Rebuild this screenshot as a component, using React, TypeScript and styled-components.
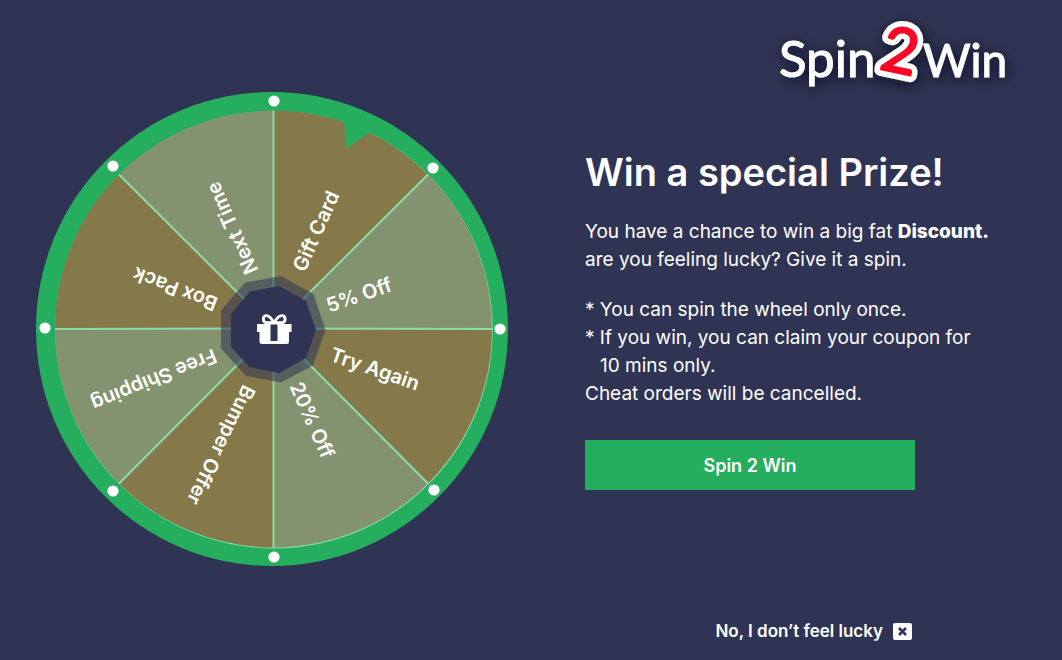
import React from 'react';
import styled, { createGlobalStyle } from 'styled-components';

const navy = '#303454';
const green = '#26ae5f';
const brown = '#857949';
const sage = '#84936f';
const mint = '#8bdcaa';

const GlobalStyle = createGlobalStyle`
  *, *::before, *::after { box-sizing: border-box; }
  body {
    margin: 0;
    background: ${navy};
    color: #fff;
    font-family: Inter, "Liberation Sans", sans-serif;
  }
`;

const Page = styled.main`
  display: grid;
  grid-template-columns: minmax(0, 472px) minmax(0, 1fr);
  column-gap: 77px;
  min-height: 100vh;
  padding: 0 56px 0 36px;
`;

const WheelPanel = styled.section`
  display: flex;
  align-items: center;
  justify-content: center;
  padding-bottom: 2px;
`;

const WheelSvg = styled.svg`
  display: block;
  width: 100%;
  height: auto;
`;

const WheelLabel = styled.text`
  fill: #fff;
  font-family: Inter, "Liberation Sans", sans-serif;
  font-size: 20px;
  font-weight: 600;
  text-anchor: middle;
  dominant-baseline: central;
`;

const Offer = styled.section`
  display: flex;
  flex-direction: column;
  padding: 12px 0 17px;
`;

const LogoSvg = styled.svg`
  display: block;
  align-self: flex-end;
  width: 240px;
  height: 88px;
  overflow: visible;
`;

const LogoWord = styled.text<{ $size: number }>`
  fill: #fff;
  stroke: #fff;
  stroke-width: 1px;
  font-family: Lato, "Liberation Sans", sans-serif;
  font-size: ${(p) => p.$size}px;
`;

const LogoDigit = styled.text<{ $outline?: boolean }>`
  fill: ${(p) => (p.$outline ? '#fff' : '#f80824')};
  stroke: ${(p) => (p.$outline ? '#fff' : '#f80824')};
  stroke-width: ${(p) => (p.$outline ? 13 : 2)}px;
  stroke-linejoin: round;
  font-family: Lato, "Liberation Sans", sans-serif;
  font-size: 63px;
  font-weight: 400;
`;

const Title = styled.h1`
  margin: 48px 0 0;
  font-size: 38px;
  line-height: 48px;
  font-weight: 600;
`;

const Copy = styled.p`
  margin: 22px 0 0;
  font-size: 19px;
  line-height: 28px;
  font-weight: 400;

  strong { font-weight: 800; }
`;

const Rules = styled.ul`
  margin: 22px 0 0;
  padding: 0;
  list-style: none;
  font-size: 19px;
  line-height: 28px;
`;

const Rule = styled.li<{ $starred?: boolean }>`
  padding-left: ${(p) => (p.$starred ? 15 : 0)}px;
  text-indent: ${(p) => (p.$starred ? -15 : 0)}px;
`;

const SpinButton = styled.button`
  width: 100%;
  max-width: 330px;
  height: 50px;
  margin-top: 32px;
  border: 0;
  background: ${green};
  color: #fff;
  font: inherit;
  font-size: 18px;
  font-weight: 600;
  cursor: pointer;
`;

const Footer = styled.footer`
  display: flex;
  justify-content: flex-end;
  width: 100%;
  max-width: 327px;
  margin-top: auto;
`;

const DeclineButton = styled.button`
  display: flex;
  align-items: center;
  gap: 10px;
  padding: 0;
  border: 0;
  background: none;
  color: #fff;
  font: inherit;
  font-size: 17px;
  line-height: 24px;
  font-weight: 600;
  cursor: pointer;
`;

const CX = 273.5;
const CY = 329;
const R = 218.5;

const prizes = [
  { label: 'Gift Card', x: 316, y: 231, angle: -66 },
  { label: '5% Off', x: 359, y: 295, angle: -19 },
  { label: 'Try Again', x: 375, y: 369, angle: 19 },
  { label: '20% Off', x: 312, y: 420, angle: 66 },
  { label: 'Bumper Offer', x: 221, y: 445, angle: 116 },
  { label: 'Free Shipping', x: 154, y: 380, angle: 158 },
  { label: 'Box Pack', x: 175, y: 289, angle: 201 },
  { label: 'Next Time', x: 232, y: 228, angle: 246 },
];

const studs = [
  [274, 101], [433, 168], [500, 329], [434, 490],
  [274, 557], [113, 491], [45, 328], [113, 166],
];

const point = (deg: number) => {
  const a = (deg * Math.PI) / 180;
  return `${(CX + R * Math.cos(a)).toFixed(1)} ${(CY + R * Math.sin(a)).toFixed(1)}`;
};

const Wheel = () => (
  <WheelSvg viewBox="36 92 472 474" role="img" aria-label="Prize wheel">
    <ellipse cx="272" cy="329" rx="236" ry="237" fill={green} />
    <circle cx={CX + 0.5} cy={CY + 0.7} r={R + 0.2} fill={mint} />
    {prizes.map((p, i) => (
      <path
        key={p.label}
        d={`M${CX} ${CY}L${point(-90 + i * 45)}A${R} ${R} 0 0 1 ${point(-45 + i * 45)}Z`}
        fill={i % 2 ? sage : brown}
      />
    ))}
    {prizes.map((p, i) => (
      <path key={p.label} d={`M${CX} ${CY - 0.5}L${point(-90 + i * 45)}`} stroke={mint} strokeWidth="2" />
    ))}
    <path d="M340 112L344 121.500L346.500 148.500L369.500 132.500L380 128Z" fill={green} />
    {studs.map(([x, y]) => (
      <circle key={`${x}-${y}`} cx={x} cy={y} r="5.600" fill="#fff" />
    ))}
    <path
      d="M325.500 329.700L313.500 294L281 276L245 282.500L221 310.500V348.500L246 376L281 382.500L313 365.500Z"
      fill={navy}
      fillOpacity="0.55"
    />
    <path
      d="M316 329.700L306 301L279 286L250 291.500L231 314V347L250 367.500L279.500 373L306 358Z"
      fill={navy}
    />
    <g fill="#fff">
      <path d="M257 324H291.500V332H289V341.500Q289 344 286.500 344H262Q259.500 344 259.500 341.500V332H257Z" />
      <path
        d="M274 323C271 317 268 315.300 265.800 315.600C262.500 316 262.500 322 266 322.600H282.500C286 322 286 316 282.500 315.600C280 315.300 277 317 274 323"
        fill="none"
        stroke="#fff"
        strokeWidth="2.800"
      />
      <path d="M270.500 324.500H277.500V341H270.500Z" fill={navy} />
    </g>
    {prizes.map((p) => (
      <WheelLabel key={p.label} x={p.x} y={p.y} transform={`rotate(${p.angle} ${p.x} ${p.y})`}>
        {p.label}
      </WheelLabel>
    ))}
  </WheelSvg>
);

const Logo = () => (
  <LogoSvg viewBox="766 12 240 88" role="img" aria-label="Spin2Win">
    <defs>
      <filter id="logoShadow" x="-20%" y="-50%" width="140%" height="200%">
        <feDropShadow dx="2" dy="3" stdDeviation="7" floodColor="#080a18" floodOpacity="0.85" />
      </filter>
    </defs>
    <g filter="url(#logoShadow)">
      <LogoWord $size={51} x="779" y="77">Spin</LogoWord>
      <LogoWord $size={46} x="923" y="77">Win</LogoWord>
      <LogoDigit $outline x="882" y="73" transform="rotate(12 900 52)">2</LogoDigit>
    </g>
    <LogoDigit x="882" y="73" transform="rotate(12 900 52)">2</LogoDigit>
  </LogoSvg>
);

const App = () => (
  <>
    <GlobalStyle />
    <Page>
      <WheelPanel>
        <Wheel />
      </WheelPanel>
      <Offer>
        <Logo />
        <Title>Win a special Prize!</Title>
        <Copy>
          You have a chance to win a big fat <strong>Discount.</strong>
          <br />
          are you feeling lucky? Give it a spin.
        </Copy>
        <Rules>
          <Rule $starred>* You can spin the wheel only once.</Rule>
          <Rule $starred>
            * If you win, you can claim your coupon for
            <br />
            10 mins only.
          </Rule>
          <Rule>Cheat orders will be cancelled.</Rule>
        </Rules>
        <SpinButton type="button">Spin 2 Win</SpinButton>
        <Footer>
          <DeclineButton type="button">
            No, I don’t feel lucky
            <svg width="19" height="17" viewBox="0 0 19 17" aria-hidden="true">
              <rect width="19" height="17" rx="2" fill="#fff" />
              <path d="M6 5L13 12M13 5L6 12" stroke={navy} strokeWidth="2.600" />
            </svg>
          </DeclineButton>
        </Footer>
      </Offer>
    </Page>
  </>
);

export default App;
